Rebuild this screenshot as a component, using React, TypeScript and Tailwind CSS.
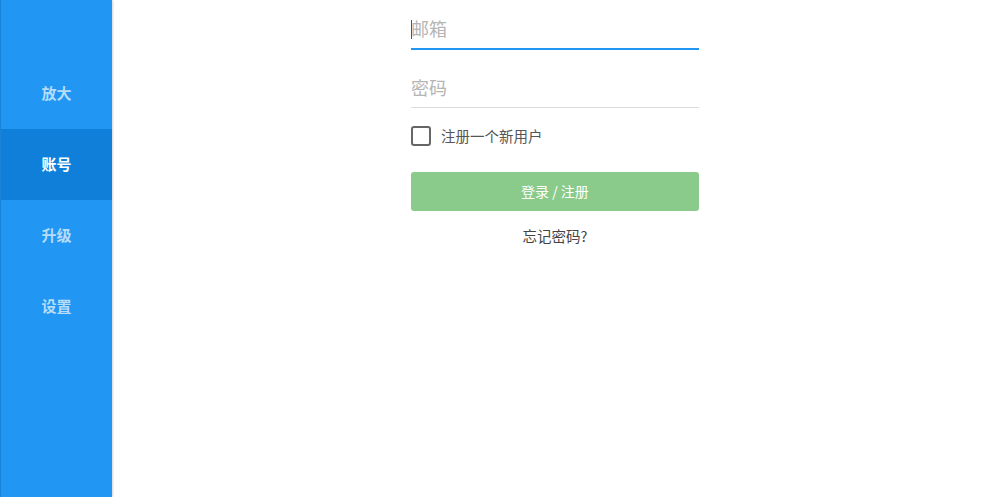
import React, { useState } from 'react';

const navItems = ['放大', '账号', '升级', '设置'];

const App: React.FC = () => {
  const [active, setActive] = useState('账号');
  const [email, setEmail] = useState('');
  const [password, setPassword] = useState('');
  const [register, setRegister] = useState(false);

  return (
    <div
      className="w-[1003px] h-[497px] flex bg-white overflow-hidden"
      style={{ fontFamily: '"Microsoft YaHei", "Noto Sans CJK SC", "Noto Sans", sans-serif' }}
    >
      {/* Sidebar */}
      <div className="w-[112px] shrink-0 bg-[#2196f3] border-l border-[#1b83d6] pt-[58px] flex flex-col shadow-[1px_0_2px_rgba(0,0,0,0.18)] z-10">
        {navItems.map(item => (
          <button
            key={item}
            onClick={() => setActive(item)}
            className={`h-[71px] w-full flex items-center justify-center text-[15px] font-bold ${
              active === item ? 'bg-[#0f7fd9] text-white' : 'text-[#b6dcfa]'
            }`}
          >
            {item}
          </button>
        ))}
      </div>

      {/* Main */}
      <div className="flex-1 flex justify-center pr-[5px]">
        <div className="w-[288px] pt-[12px] flex flex-col">
          <div className="relative h-[38px] pb-[4px] border-b-2 border-[#2196f3]">
            <input
              value={email}
              onChange={e => setEmail(e.target.value)}
              placeholder="邮箱"
              className="w-full h-full outline-none text-[18px] text-[#333] placeholder:text-[#b5b5b5] bg-transparent"
            />
            {email === '' && <span className="absolute left-0 top-[8px] w-px h-[19px] bg-[#555]" />}
          </div>

          <div className="mt-[21px] h-[37px] pb-[4px] border-b border-[#dcdcdc]">
            <input
              type="password"
              value={password}
              onChange={e => setPassword(e.target.value)}
              placeholder="密码"
              className="w-full h-full outline-none text-[18px] text-[#333] placeholder:text-[#b5b5b5] bg-transparent"
            />
          </div>

          <label className="mt-[17px] flex items-center gap-[10px] cursor-pointer">
            <span
              onClick={() => setRegister(!register)}
              className={`w-[20px] h-[20px] rounded-[3px] border-2 border-[#666] flex items-center justify-center text-[12px] leading-none ${
                register ? 'bg-[#666] text-white' : 'bg-white'
              }`}
            >
              {register ? '✓' : ''}
            </span>
            <span className="text-[14.5px] text-[#555]">注册一个新用户</span>
          </label>

          <button className="mt-[25px] h-[39px] rounded-[3px] bg-[#8acb8c] text-white text-[14px]">
            登录 / 注册
          </button>

          <div className="mt-[14px] text-center text-[14.5px] text-[#444]">忘记密码?</div>
        </div>
      </div>
    </div>
  );
};

export default App;
